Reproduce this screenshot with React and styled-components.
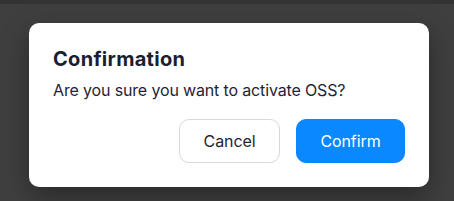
import React from "react";
import styled, { createGlobalStyle } from "styled-components";

const Global = createGlobalStyle`
  html, body { margin: 0; padding: 0; }
  body {
    width: 454px;
    height: 201px;
    overflow: hidden;
    background: #3f3f3f;
    font-family: Inter, "Noto Sans", sans-serif;
  }
`;

const Backdrop = styled.div`
  width: 454px;
  height: 201px;
  box-sizing: border-box;
  border-top: 4px solid #343434;
  padding: 19px 25px 0 29px;
`;

const Dialog = styled.div`
  width: 400px;
  box-sizing: border-box;
  background: #ffffff;
  border-radius: 10px;
  padding: 24px;
  box-shadow: 0 10px 28px rgba(0, 0, 0, 0.35);
  display: flex;
  flex-direction: column;
`;

const Title = styled.h2`
  margin: 0;
  font-size: 20px;
  line-height: 24px;
  font-weight: 700;
  color: #1b1e30;
  letter-spacing: 0.3px;
`;

const Message = styled.p`
  margin: 7px 0 0;
  font-size: 16px;
  line-height: 24px;
  color: #1f2336;
  letter-spacing: -0.15px;
`;

const Actions = styled.div`
  display: flex;
  justify-content: flex-end;
  gap: 16px;
  margin-top: 17px;
`;

const Button = styled.button`
  height: 44px;
  width: ${(p) => (p.$primary ? "109px" : "101px")};
  padding: 0;
  border-radius: 10px;
  font-family: inherit;
  font-size: 16px;
  line-height: 20px;
  letter-spacing: -0.1px;
  cursor: pointer;
  border: 1px solid ${(p) => (p.$primary ? "#0a88ff" : "#d9d9d9")};
  background: ${(p) => (p.$primary ? "#0a88ff" : "#ffffff")};
  color: ${(p) => (p.$primary ? "#ffffff" : "#1f2336")};
`;

export default function App() {
  return (
    <>
      <Global />
      <Backdrop>
        <Dialog>
          <Title>Confirmation</Title>
          <Message>Are you sure you want to activate OSS?</Message>
          <Actions>
            <Button>Cancel</Button>
            <Button $primary>Confirm</Button>
          </Actions>
        </Dialog>
      </Backdrop>
    </>
  );
}
